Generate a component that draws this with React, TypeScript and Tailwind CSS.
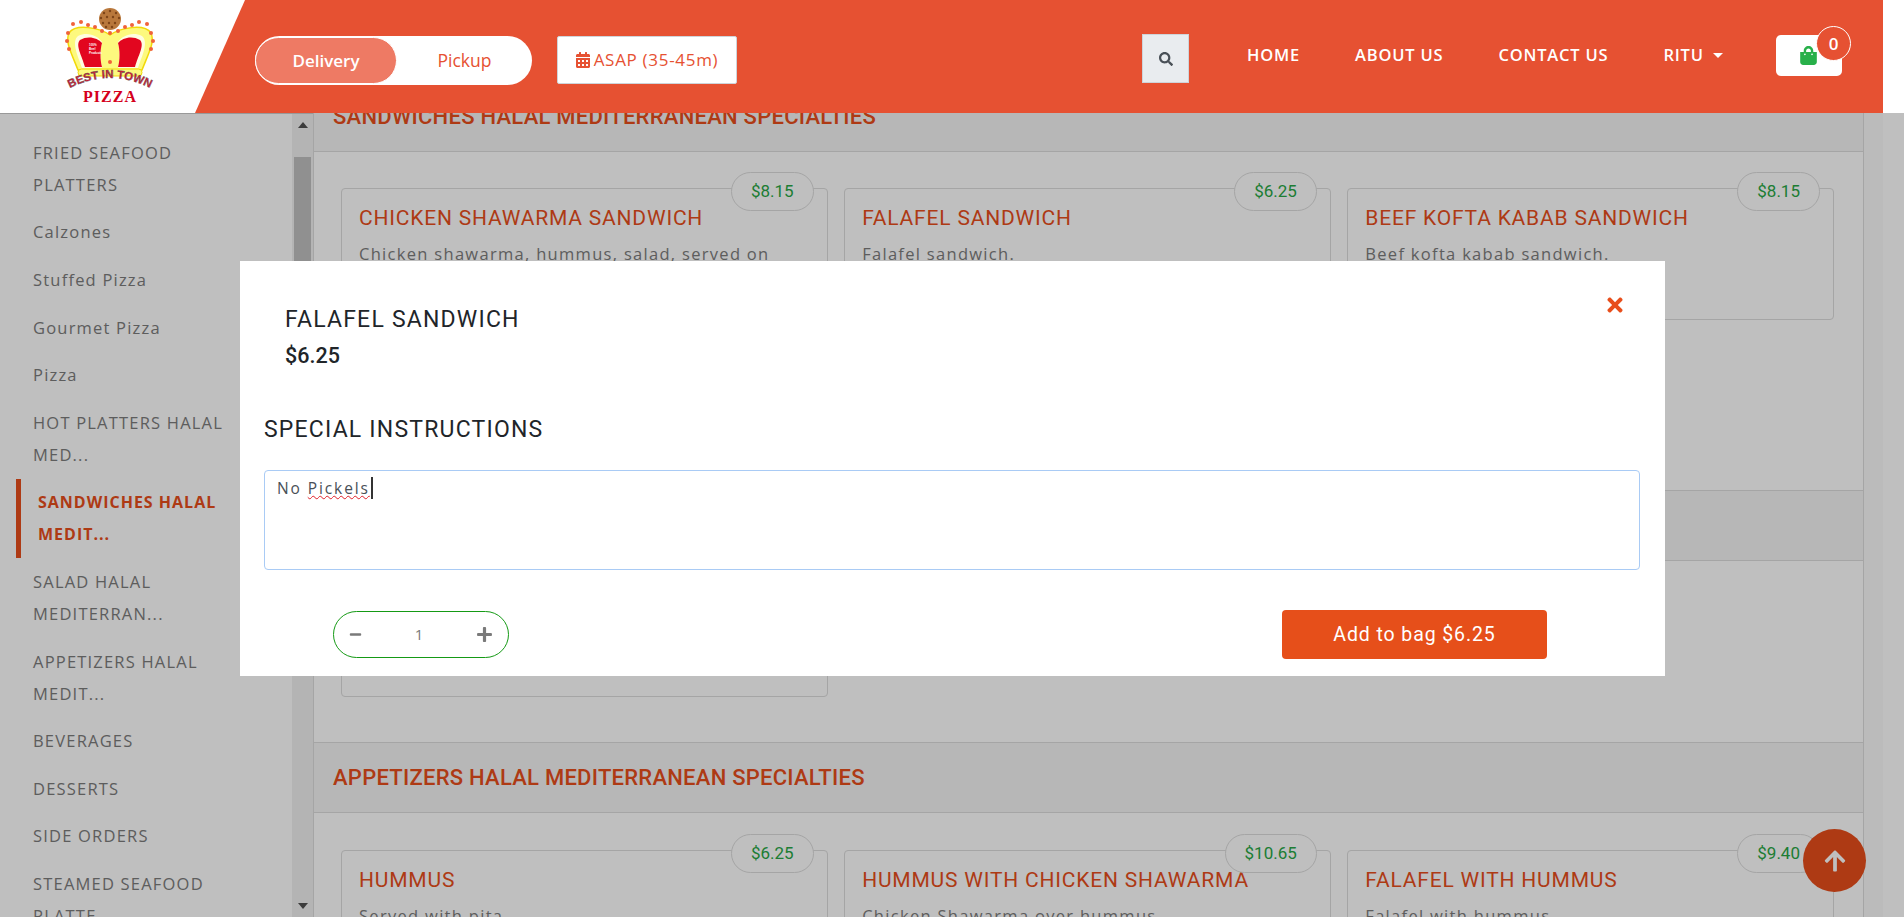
import React from 'react';
import { FaArrowUp, FaCalendarAlt, FaMinus, FaPlus, FaSearch, FaShoppingBag, FaTimes } from 'react-icons/fa';

const sideItems = [
  'FRIED SEAFOOD\nPLATTERS',
  'Calzones',
  'Stuffed Pizza',
  'Gourmet Pizza',
  'Pizza',
  'HOT PLATTERS HALAL\nMED...',
  'SANDWICHES HALAL\nMEDIT...',
  'SALAD HALAL\nMEDITERRAN...',
  'APPETIZERS HALAL\nMEDIT...',
  'BEVERAGES',
  'DESSERTS',
  'SIDE ORDERS',
  'STEAMED SEAFOOD\nPLATTE...',
];

const dots = [
  [28, 33], [27, 41], [29, 49], [33, 24], [41, 22], [48, 25], [55, 27], [62, 31], [70, 33],
  [78, 31], [85, 27], [92, 25], [99, 22], [107, 24], [111, 33], [113, 41], [111, 49],
];

const specks = [
  [64, 13], [70, 11], [76, 13], [61, 18], [67, 17], [73, 17], [79, 18],
  [63, 23], [69, 23], [75, 23], [66, 27], [72, 27],
];

const Logo = () => (
  <svg width="130" height="112" viewBox="0 0 130 112" aria-hidden="true">
    <defs>
      <path id="logo-arc" d="M26 90 Q70 66 114 90" fill="none" />
    </defs>
    <circle cx="70" cy="19" r="11" fill="#b9783c" />
    {specks.map(([cx, cy]) => (
      <circle key={`${cx}-${cy}`} cx={cx} cy={cy} r="1.2" fill="#7d4418" />
    ))}
    <path d="M38 70C31 52 25 42 29 33C36 23 60 28 70 35C80 28 104 23 111 33C115 42 109 52 102 70Z" fill="#fdf97e" stroke="#f2d90a" strokeWidth="1.5" />
    <path d="M42 68C38 56 31 42 38 36C48 31 58 36 62 42C60 50 60 60 62 68Z" fill="#fffde0" />
    <path d="M45 67C42 56 35 45 40 40C48 35 58 38 62 43C60 50 60 60 62 67Z" fill="#e2061f" />
    <path d="M98 68C102 56 109 42 102 36C92 31 82 36 78 42C80 50 80 60 78 68Z" fill="#fffde0" />
    <path d="M95 67C98 56 105 45 100 40C92 35 82 38 78 43C80 50 80 60 78 67Z" fill="#e2061f" />
    <text x="49" y="46" fontSize="3" fill="#fff" fontFamily="Liberation Sans, sans-serif" fontWeight="700">100%</text>
    <text x="49" y="50" fontSize="3" fill="#fff" fontFamily="Liberation Sans, sans-serif" fontWeight="700">Beef</text>
    <text x="49" y="54" fontSize="3" fill="#fff" fontFamily="Liberation Sans, sans-serif" fontWeight="700">Products</text>
    <rect x="38" y="69" width="64" height="7" rx="3.5" fill="#fdf97e" stroke="#f2d90a" />
    {dots.map(([cx, cy]) => (
      <circle key={`${cx}-${cy}`} cx={cx} cy={cy} r="2" fill="#f0633a" />
    ))}
    <circle cx="70" cy="62" r="2" fill="#f0633a" />
    <text fontSize="11.5" fontWeight="700" fontFamily="Liberation Sans, sans-serif" fill="#d31a35" stroke="#555" strokeWidth="0.4">
      <textPath href="#logo-arc" startOffset="50%" textAnchor="middle">BEST IN TOWN</textPath>
    </text>
    <text x="70" y="102" textAnchor="middle" fontSize="16" fontWeight="700" letterSpacing="1" fontFamily="Liberation Serif, serif" fill="#d5001c">PIZZA</text>
  </svg>
);

const Header = () => (
  <header className="relative z-20 flex h-[113px] w-[1883px] shrink-0 bg-[#e65132] font-['Open_Sans',sans-serif]">
    <div className="h-full w-[245px] bg-white pl-[40px] [clip-path:polygon(0_0,100%_0,79.6%_100%,0_100%)]">
      <Logo />
    </div>
    <div className="ml-[10px] mt-[36px] flex h-[49px] w-[277px] rounded-full bg-white text-[17px]">
      <div className="mt-[1px] flex h-[47px] w-[142px] items-center justify-center rounded-[24px] border border-white bg-[#ee7a64] font-semibold text-white">Delivery</div>
      <div className="flex h-[49px] flex-1 items-center justify-center text-[17.5px] text-[#e65132]">Pickup</div>
    </div>
    <div className="ml-[25px] mt-[36px] flex h-[48px] w-[180px] items-center justify-center gap-[4px] rounded-[2px] border border-[#ced4da] bg-white text-[17px] tracking-[0.7px] text-[#e65132]">
      <FaCalendarAlt className="h-[16px] w-[14px]" />
      <span>ASAP (35-45m)</span>
    </div>
    <div className="ml-[405px] mt-[34px] flex h-[49px] w-[47px] items-center justify-center border border-[#ced4da] bg-[#e9ecef] text-[#495057]">
      <FaSearch className="h-[14px] w-[14px]" />
    </div>
    <nav className="ml-[58px] mt-[42px] flex h-[26px] items-center gap-[55px] text-[16.5px] font-semibold leading-[26px] tracking-[0.8px] text-white">
      <span>HOME</span>
      <span>ABOUT US</span>
      <span>CONTACT US</span>
      <span className="flex items-center gap-[9px]">
        RITU
        <span className="h-0 w-0 border-x-[5px] border-t-[5px] border-x-transparent border-t-white" />
      </span>
    </nav>
    <div className="relative ml-auto mr-[41px] mt-[35px] flex h-[41px] w-[66px] items-center rounded-[5px] bg-white pl-[24px]">
      <FaShoppingBag className="h-[19px] w-[17px] text-[#28b04a]" />
      <span className="absolute left-[40px] top-[-9px] flex h-[35px] w-[35px] items-center justify-center rounded-full border border-white bg-[#e65132] text-[17px] font-semibold text-white">0</span>
    </div>
  </header>
);

const Sidebar = () => (
  <aside className="flex w-[313px] shrink-0 border-t border-[#ccc] font-['Open_Sans',sans-serif]">
    <ul className="w-[292px] shrink-0 overflow-hidden pl-[16px] pt-[15px] text-[16.5px] leading-[32px] tracking-[1.2px] text-[#7c7c7c]">
      {sideItems.map((item) =>
        item.startsWith('SANDWICHES') ? (
          <li key={item} className="whitespace-pre-line border-l-[5px] border-[#e84e1b] py-[7.8px] pl-[17px] text-[16px] font-bold tracking-[1px] text-[#e84e1b]">{item}</li>
        ) : (
          <li key={item} className="whitespace-pre-line py-[7.8px] pl-[17px]">{item}</li>
        ),
      )}
    </ul>
    <div className="relative w-[21px] shrink-0 bg-[#f1f1f1]">
      <span className="absolute left-[6px] top-[8px] h-0 w-0 border-x-[5px] border-b-[6px] border-x-transparent border-b-[#505050]" />
      <div className="ml-[2px] mt-[43px] h-[300px] w-[17px] bg-[#c1c1c1]" />
      <span className="absolute bottom-[8px] left-[6px] h-0 w-0 border-x-[5px] border-t-[6px] border-x-transparent border-t-[#505050]" />
    </div>
  </aside>
);

interface CardProps {
  name: string;
  text: string;
  price: string;
  tall?: boolean;
}

const Card: React.FC<CardProps> = ({ name, text, price, tall }) => (
  <div className={`relative rounded-[4px] border border-[#dcdcdc] pl-[17px] pr-[16px] pt-[15px] ${tall ? 'h-[132px]' : 'h-[200px]'}`}>
    <span className="absolute right-[13px] top-[-17px] flex h-[39px] items-center rounded-[20px] border border-[#dcdcdc] bg-white px-[19px] font-['Roboto',sans-serif] text-[17px] text-[#28a745]">{price}</span>
    <h3 className="whitespace-nowrap font-['Roboto',sans-serif] text-[21px] leading-[28px] tracking-[0.8px] text-[#e84e1b]">{name}</h3>
    <p className="mt-[8px] whitespace-nowrap font-['Open_Sans',sans-serif] text-[16.5px] leading-[28px] tracking-[1.3px] text-[#7c7c7c]">{text}</p>
  </div>
);

const SectionHead = ({ title, top }: { title: string; top?: boolean }) => (
  <div className={`flex h-[71px] items-center border-b border-[#ddd] bg-[#f5f5f5] pl-[19px] font-['Roboto',sans-serif] text-[22px] font-medium tracking-[0.25px] text-[#e84e1b] ${top ? '' : 'border-t'}`}>
    {title}
  </div>
);

const Content = () => (
  <main className="w-[1551px] shrink-0 overflow-hidden border-x border-[#ddd]">
    <div className="mt-[-32px]">
      <SectionHead top title="SANDWICHES HALAL MEDITERRANEAN SPECIALTIES" />
      <div className="h-[338px] pl-[27px] pr-[29px] pt-[36px]">
        <div className="grid grid-cols-3 gap-[16.5px]">
          <Card tall name="CHICKEN SHAWARMA SANDWICH" text="Chicken shawarma, hummus, salad, served on" price="$8.15" />
          <Card tall name="FALAFEL SANDWICH" text="Falafel sandwich." price="$6.25" />
          <Card tall name="BEEF KOFTA KABAB SANDWICH" text="Beef kofta kabab sandwich." price="$8.15" />
        </div>
      </div>
      <SectionHead title="SALAD HALAL MEDITERRANEAN SPECIALTIES" />
      <div className="h-[181px] pl-[27px] pr-[29px] pt-[36px]">
        <div className="grid grid-cols-3 gap-[16.5px]">
          <div className="h-[100px] rounded-[4px] border border-[#dcdcdc]" />
        </div>
      </div>
      <SectionHead title="APPETIZERS HALAL MEDITERRANEAN SPECIALTIES" />
      <div className="pl-[27px] pr-[29px] pt-[37px]">
        <div className="grid grid-cols-3 gap-[16.5px]">
          <Card name="HUMMUS" text="Served with pita." price="$6.25" />
          <Card name="HUMMUS WITH CHICKEN SHAWARMA" text="Chicken Shawarma over hummus." price="$10.65" />
          <Card name="FALAFEL WITH HUMMUS" text="Falafel with hummus." price="$9.40" />
        </div>
      </div>
    </div>
  </main>
);

const Modal = () => (
  <div className="relative h-[415px] w-[1425px] bg-white pt-[45px] font-['Roboto',sans-serif] text-[#212529]">
    <FaTimes className="absolute right-[40px] top-[33px] h-[22px] w-[20px] text-[#e84e1b]" />
    <h2 className="ml-[45px] text-[23px] leading-[28px] tracking-[1.2px]">FALAFEL SANDWICH</h2>
    <p className="ml-[45px] mt-[8px] text-[21.5px] font-medium leading-[28px]">$6.25</p>
    <h2 className="ml-[24px] mt-[46px] text-[23px] leading-[28px] tracking-[1.2px]">SPECIAL INSTRUCTIONS</h2>
    <div className="ml-[24px] mt-[26px] h-[100px] w-[1376px] rounded-[4px] border border-[#a9cbf5] px-[12px] py-[1px] font-['Open_Sans',sans-serif] text-[15.5px] leading-[26px] tracking-[1.9px] text-[#495057]">
      No <span className="underline decoration-[#e0202a] decoration-wavy decoration-1">Pickels</span><span className="ml-[1px] inline-block h-[22px] w-[2px] translate-y-[5px] bg-[#333]" />
    </div>
    <div className="ml-[93px] mt-[40px] flex items-center">
      <div className="flex h-[47px] w-[176px] items-center justify-between rounded-full border border-[#159a15] px-[15px] text-[#7a7a7a]">
        <FaMinus className="h-[13px] w-[13px]" />
        <span className="font-['Open_Sans',sans-serif] text-[15px]">1</span>
        <FaPlus className="h-[17px] w-[17px]" />
      </div>
      <button className="ml-[773px] flex h-[49px] w-[265px] items-center justify-center rounded-[4px] bg-[#e64f1a] text-[19.5px] tracking-[0.9px] text-white">Add to bag $6.25</button>
    </div>
  </div>
);

export default function App() {
  return (
    <div className="relative flex h-[917px] w-full flex-col overflow-hidden bg-white">
      <Header />
      <div className="flex min-h-0 flex-1">
        <Sidebar />
        <Content />
        <div className="w-[19px] shrink-0 bg-[#fafafa]" />
      </div>
      <button className="absolute left-[1803px] top-[829px] flex h-[63px] w-[63px] items-center justify-center rounded-full bg-[#e84e1b] text-white">
        <FaArrowUp className="h-[24px] w-[24px]" />
      </button>
      <div className="absolute inset-x-0 bottom-0 top-[113px] z-10 bg-black/25 pl-[240px] pt-[148px]">
        <Modal />
      </div>
    </div>
  );
}
